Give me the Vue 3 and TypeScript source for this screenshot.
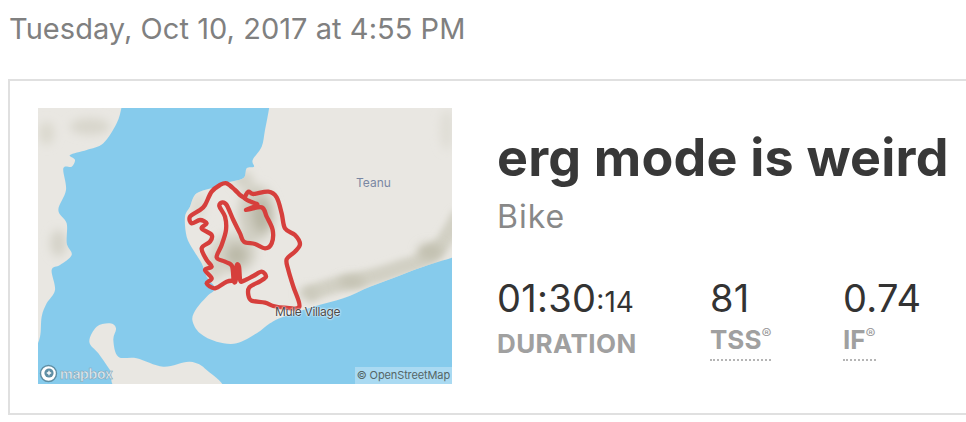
<script setup lang="ts">
type P = [number, number]
function curve(pts: P[], closed: boolean): string {
  const n = pts.length
  const at = (i: number): P => (closed ? pts[(i + n) % n] : pts[Math.min(Math.max(i, 0), n - 1)])
  let d = `M${pts[0][0]} ${pts[0][1]}`
  const last = closed ? n : n - 1
  for (let i = 0; i < last; i++) {
    const a = at(i - 1), b = at(i), c = at(i + 1), e = at(i + 2)
    d += `C${(b[0] + (c[0] - a[0]) / 6).toFixed(1)} ${(b[1] + (c[1] - a[1]) / 6).toFixed(1)} ${(c[0] - (e[0] - b[0]) / 6).toFixed(1)} ${(c[1] - (e[1] - b[1]) / 6).toFixed(1)} ${c[0]} ${c[1]}`
  }
  return d + (closed ? 'Z' : '')
}
const shift = (pts: P[]): P[] => pts.map(([x, y]): P => [x + 420, y + 210])
const routePath = curve(shift([
  [388,410],[345,413],[310,408],[285,398],[245,392],[235,375],[238,352],[270,334],[288,320],[275,305],[250,318],[222,332],[211,332],
  [207,290],[200,287],[197,332],[191,332],[186,288],[165,275],[140,262],[155,225],[168,180],[165,140],[148,108],[157,97],[170,105],[190,150],[210,190],[222,215],[255,222],[285,235],[305,220],[308,180],[290,140],[275,112],[228,120],[262,105],[242,95],[225,85],[235,65],[250,72],[295,65],[320,82],[335,130],[345,175],[375,195],[390,222],[375,245],[350,268],[355,300],[370,350]
]), true)
const westPath = curve(shift([
  [225,85],[210,75],[195,60],[170,40],[150,45],[125,65],[105,105],[90,120],[60,140],[65,160],[90,150],[110,160],[95,175],[125,195],[120,215],[95,235],[110,270],[125,290],[105,300],[125,325],[110,340],[135,355],[170,335],[188,332]
]), false)
const mainLand = curve([
  [725,-40],[718,20],[705,90],[695,140],[668,180],[672,200],[650,205],[640,235],[590,248],[560,260],[500,280],[480,320],[465,350],[470,410],[490,450],[515,490],[530,530],[555,565],[530,590],[500,625],[487,660],[510,700],[560,725],[620,730],[680,700],[720,670],[760,650],[850,620],[940,595],[1020,560],[1100,530],[1180,500],[1290,465],[1340,440],[1340,-40]
], true)
const leftLand = curve([
  [-40,-40],[285,-40],[275,20],[260,70],[220,130],[170,150],[120,165],[135,180],[125,200],[100,205],[108,270],[85,330],[110,370],[110,430],[125,465],[90,495],[65,510],[75,570],[50,610],[35,650],[30,710],[10,750],[-40,780]
], true)
const bottomLand = curve([
  [200,680],[240,670],[258,685],[250,720],[265,770],[320,775],[400,800],[480,785],[530,810],[565,870],[280,870],[240,810],[205,760],[178,725]
], true)
const stats = [
  { value: '81', label: 'TSS' },
  { value: '0.74', label: 'IF' }
]
</script>

<template>
  <div class="page">
    <div class="date">Tuesday, Oct 10, 2017 at 4:55 PM</div>
    <section class="card">
      <div class="map">
        <svg class="map-svg" viewBox="24 24 1242 828" width="414" height="276">
          <defs>
            <filter id="b1" x="-40%" y="-40%" width="180%" height="180%"><feGaussianBlur stdDeviation="14" /></filter>
            <filter id="b3" x="-20%" y="-60%" width="140%" height="220%"><feGaussianBlur stdDeviation="10" /></filter>
            <filter id="b2" x="-5%" y="-5%" width="110%" height="110%"><feGaussianBlur stdDeviation="1.5" /></filter>
            <clipPath id="land"><path :d="mainLand" /></clipPath>
            <clipPath id="left"><path :d="leftLand" /></clipPath>
          </defs>
          <rect x="24" y="24" width="1242" height="828" fill="#86cbec" />
          <g filter="url(#b2)" fill="#e9e7e2">
            <path :d="mainLand" />
            <path :d="leftLand" />
            <path :d="bottomLand" />
          </g>
          <g clip-path="url(#land)">
            <g filter="url(#b3)" fill="none">
              <path d="M830 585Q890 560 960 545 1040 530 1120 500 1180 490 1230 440 1260 400 1290 340" stroke="#d2d0c4" stroke-width="48" />
            </g>
            <g filter="url(#b1)">
              <ellipse cx="680" cy="340" rx="55" ry="85" fill="#cfcdc1" />
              <ellipse cx="610" cy="460" rx="70" ry="60" fill="#d3d1c6" />
              <ellipse cx="695" cy="345" rx="28" ry="50" fill="#b8b6a4" />
              <ellipse cx="620" cy="465" rx="32" ry="32" fill="#bcbaa9" />
              <ellipse cx="640" cy="240" rx="30" ry="25" fill="#d3d1c6" />
              <ellipse cx="555" cy="500" rx="28" ry="40" fill="#d4d2c6" />
              <ellipse cx="505" cy="320" rx="22" ry="38" fill="#dddbd2" />
              <ellipse cx="835" cy="580" rx="30" ry="16" fill="#c9c7b9" />
              <ellipse cx="965" cy="545" rx="40" ry="16" fill="#c3c1b1" />
              <ellipse cx="1200" cy="455" rx="38" ry="26" fill="#c3c1b1" />
              <ellipse cx="1250" cy="90" rx="20" ry="60" fill="#dfddd5" />
            </g>
          </g>
          <g clip-path="url(#left)">
            <g filter="url(#b1)">
              <ellipse cx="85" cy="430" rx="25" ry="40" fill="#d5d3c9" />
              <ellipse cx="180" cy="80" rx="60" ry="25" fill="#d8d6cc" />
              <ellipse cx="50" cy="100" rx="24" ry="35" fill="#dbd9cf" />
            </g>
          </g>
          <path :d="westPath" class="route" />
          <path :d="routePath" class="route" />
        </svg>
        <span class="place teanu">Teanu</span>
        <span class="place mule">Mule Village</span>
        <div class="mapbox">
          <svg width="19" height="19" viewBox="0 0 19 19"><circle cx="9.5" cy="9.5" r="8" fill="#fff" stroke="#5e8ea4" stroke-width="1.4" /><circle cx="10" cy="9" r="4.6" fill="#5e8ea4" /><path d="M10 6.8v4.4M7.8 9h4.4" stroke="#fff" stroke-width="1.3" /></svg>
          <span>mapbox</span>
        </div>
        <div class="attr">© OpenStreetMap</div>
      </div>
      <div class="info">
        <h1 class="title">erg mode is weird</h1>
        <div class="sport">Bike</div>
        <div class="stats">
          <div class="stat duration">
            <div class="value">01:30<small>:14</small></div>
            <div class="label">DURATION</div>
          </div>
          <div v-for="s in stats" :key="s.label" class="stat">
            <div class="value">{{ s.value }}</div>
            <div class="label"><span class="dotted">{{ s.label }}<sup>®</sup></span></div>
          </div>
        </div>
      </div>
    </section>
  </div>
</template>

<style>
html, body { margin: 0; background: #fff; overflow: hidden; }
</style>

<style scoped>
.page { width: 966px; height: 422px; overflow: hidden; font-family: Inter, "Open Sans", sans-serif; color: #333; }
.date { padding: 11px 0 0 9px; font-size: 29px; line-height: 36px; color: #808080; height: 32px; letter-spacing: .05px; }
.card { margin: 36px 0 0 8px; width: 1000px; border: 2px solid #e0e0e0; display: flex; padding: 27px 0 0 28px; height: 305px; }
.map { position: relative; width: 414px; height: 276px; overflow: hidden; flex: none; }
.map-svg { display: block; }
.route { fill: none; stroke: #d63f3c; stroke-width: 13; stroke-linejoin: round; stroke-linecap: round; }
.place { position: absolute; font-size: 12px; white-space: nowrap; }
.teanu { left: 318px; top: 67px; color: #7a87a3; }
.mule { left: 237px; top: 196px; color: #4a4a4a; letter-spacing: -.35px; text-shadow: 0 0 2px #fff, 0 0 2px #fff; }
.mapbox { position: absolute; left: 1px; bottom: 1px; display: flex; align-items: center; gap: 2px; font-size: 14px; font-weight: 700; }
.mapbox span { color: #dfe8ed; letter-spacing: -.4px; -webkit-text-stroke: .5px #7ea3b5; }
.attr { position: absolute; right: 0; bottom: 0; padding: 1px 2px; background: rgba(255,255,255,.3); font-size: 11px; letter-spacing: -.12px; line-height: 15px; color: #566; }
.info { margin-left: 45px; }
.title { margin: 20px 0 0; font-size: 52px; line-height: 60px; font-weight: 700; color: #383838; white-space: nowrap; letter-spacing: .2px; }
.sport { font-size: 32px; line-height: 36px; color: #888; margin-top: 11px; letter-spacing: 1px; }
.stats { display: flex; margin-top: 41px; }
.stat { width: 133px; }
.stat.duration { width: 213px; }
.value { font-size: 38px; line-height: 44px; color: #333; letter-spacing: .3px; }
.value small { font-size: 28px; letter-spacing: 0; }
.label { font-size: 26px; line-height: 36px; margin-top: 2px; font-weight: 700; color: #a0a0a0; }
.stat.duration .label { letter-spacing: .4px; }
.dotted { display: inline-block; border-bottom: 2px dotted #b5b5b5; line-height: 30px; padding-bottom: 4px; }
.dotted sup { font-size: 15px; font-weight: 400; line-height: 0; vertical-align: 10px; }
</style>
